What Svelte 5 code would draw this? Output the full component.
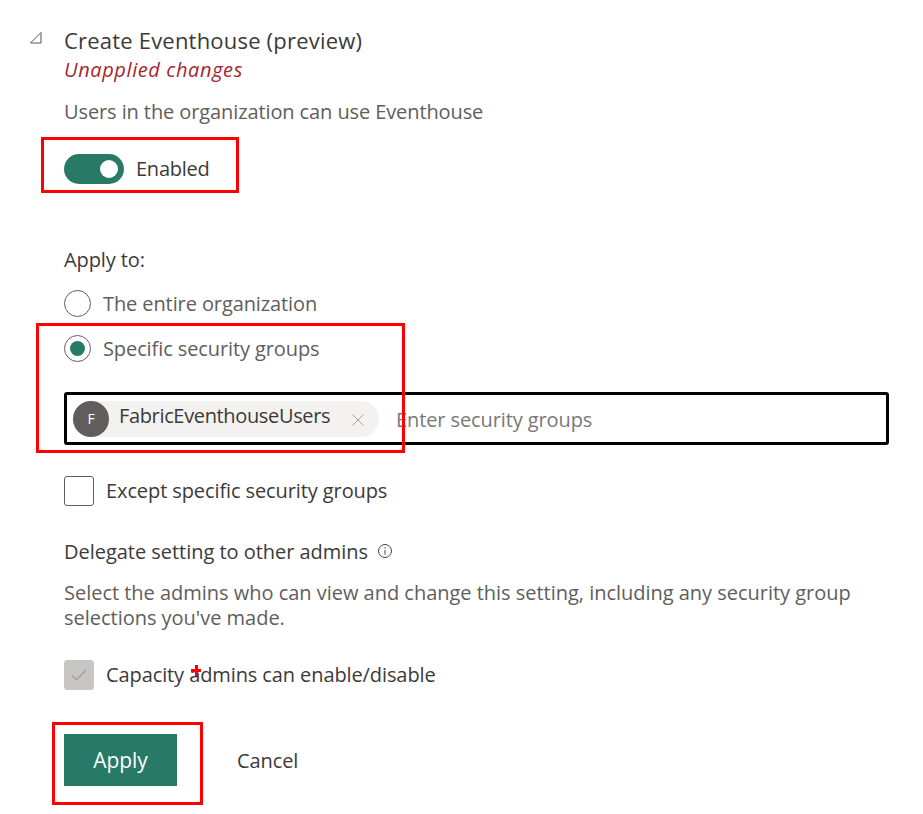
<script>
  let enabled = $state(true);
  let scope = $state('groups');
</script>

<div class="page">
  <header class="head">
    <svg class="caret" width="14" height="14" viewBox="0 0 14 14"><path d="M12 1.5 L12 12 L1.5 12 Z" fill="none" stroke="#555" stroke-width="1"/></svg>
    <div class="title">Create Eventhouse (preview)</div>
  </header>
  <div class="body">
    <div class="unapplied">Unapplied changes</div>
    <div class="desc first">Users in the organization can use Eventhouse</div>

    <div class="toggle-row">
      <span class="toggle"><span class="knob"></span></span>
      <span class="label enabled">{enabled ? 'Enabled' : 'Disabled'}</span>
    </div>

    <div class="apply-to">Apply to:</div>
    <div class="radio-row">
      <span class="radio"></span>
      <span class="muted">The entire organization</span>
    </div>
    <div class="radio-row second">
      <span class="radio on"><span class="dot"></span></span>
      <span class="muted">Specific security groups</span>
    </div>

    <div class="picker">
      <div class="chip">
        <span class="avatar">F</span>
        <span class="chip-name">FabricEventhouseUsers</span>
        <svg class="chip-x" width="14" height="14" viewBox="0 0 14 14"><path d="M1.5 1.5 L12.5 12.5 M12.5 1.5 L1.5 12.5" stroke="#a8a6a4" stroke-width="1"/></svg>
      </div>
      <span class="placeholder">Enter security groups</span>
    </div>

    <div class="check-row except">
      <span class="check"></span>
      <span class="label">Except specific security groups</span>
    </div>

    <div class="delegate">
      <span class="label">Delegate setting to other admins</span>
      <svg class="info" width="14" height="14" viewBox="0 0 14 14"><circle cx="7" cy="7" r="6.5" fill="none" stroke="#444" stroke-width="1"/><path d="M7 6 V10.6" stroke="#444" stroke-width="1"/><rect x="6.4" y="3.4" width="1.2" height="1.2" fill="#444"/></svg>
    </div>
    <p class="desc help">Select the admins who can view and change this setting, including any security group selections you've made.</p>

    <div class="check-row capacity">
      <span class="check disabled">
        <svg width="16" height="12" viewBox="0 0 16 12"><path d="M1 6.5 L5.5 11 L15 1" fill="none" stroke="#a19f9d" stroke-width="1.2"/></svg>
      </span>
      <span class="label">Capacity admins can enable/disable</span>
    </div>

    <div class="actions">
      <button class="apply">Apply</button>
      <button class="cancel">Cancel</button>
    </div>
  </div>

  <!-- screenshot annotations -->
  <div class="mark" style="left:41px;top:137px;width:198px;height:56px"></div>
  <div class="mark" style="left:36px;top:323px;width:369px;height:130px"></div>
  <div class="mark" style="left:52px;top:722px;width:151px;height:83px"></div>
  <span class="plus"></span>
</div>

<style>
  :global(body) {
    margin: 0;
    background: #fff;
  }
  .page {
    position: relative;
    height: 814px;
    overflow: hidden;
    font-family: "Open Sans", "Noto Sans", "Liberation Sans", sans-serif;
    font-size: 20px;
    letter-spacing: -0.1px;
    color: #3b3a39;
  }
  .head {
    display: flex;
    align-items: center;
    padding: 26px 0 0 29px;
    height: 28px;
  }
  .caret { margin-right: 21px; margin-top: -4px; }
  .title { font-size: 22px; letter-spacing: 0.2px; line-height: 28px; margin-top: -1px; }
  .body { padding-left: 64px; }
  .unapplied {
    color: #a4262c;
    font-style: italic;
    letter-spacing: 0.6px;
    line-height: 28px;
    margin-top: 2px;
  }
  .desc { color: #605e5c; line-height: 28px; margin: 0; }
  .first { margin-top: 14px; }
  .toggle-row {
    display: flex;
    align-items: center;
    gap: 12px;
    margin-top: 27px;
    height: 32px;
  }
  .toggle {
    width: 60px;
    height: 30px;
    border-radius: 15px;
    background: #277a66;
    display: flex;
    align-items: center;
    justify-content: flex-end;
    padding-right: 6px;
    box-sizing: border-box;
  }
  .knob { width: 18px; height: 18px; border-radius: 50%; background: #fff; }
  .label { line-height: 28px; }
  .enabled { letter-spacing: -0.25px; }
  .muted { color: #605e5c; line-height: 28px; position: relative; top: 1px; }
  .apply-to { margin-top: 61px; line-height: 28px; }
  .radio-row {
    display: flex;
    align-items: center;
    gap: 12px;
    margin-top: 15px;
    height: 28px;
  }
  .radio-row.second { margin-top: 17px; }
  .radio {
    width: 27px;
    height: 27px;
    border: 1px solid #605e5c;
    border-radius: 50%;
    box-sizing: border-box;
    display: flex;
    align-items: center;
    justify-content: center;
  }
  .dot { width: 15px; height: 15px; border-radius: 50%; background: #277a66; }
  .picker {
    display: flex;
    align-items: center;
    margin-top: 30px;
    width: 825px;
    height: 53px;
    border: 3px solid #000;
    border-radius: 3px;
    box-sizing: border-box;
    padding-left: 6px;
  }
  .chip {
    display: flex;
    align-items: center;
    width: 306px;
    height: 36px;
    border-radius: 18px;
    background: #f3f2f1;
    flex: none;
  }
  .avatar {
    width: 36px;
    height: 36px;
    border-radius: 50%;
    background: #605e5c;
    color: #fff;
    font-size: 14px;
    display: flex;
    align-items: center;
    justify-content: center;
    flex: none;
  }
  .chip-name { margin-left: 10px; margin-top: -7px; letter-spacing: -0.35px; white-space: nowrap; }
  .chip-x { margin-left: 21px; margin-top: 2px; }
  .placeholder { margin-left: 17px; margin-top: 2px; color: #7a7876; white-space: nowrap; }
  .check-row { display: flex; align-items: center; gap: 12px; height: 30px; }
  .except { margin-top: 31px; }
  .check {
    width: 30px;
    height: 30px;
    border: 1px solid #605e5c;
    border-radius: 3px;
    box-sizing: border-box;
    display: flex;
    align-items: center;
    justify-content: center;
  }
  .check.disabled { background: #c8c6c4; border-color: #c8c6c4; }
  .delegate { display: flex; align-items: center; gap: 10px; margin-top: 32px; height: 28px; letter-spacing: -0.03px; }
  .info { margin-top: -3px; }
  .help { margin-top: 14px; width: 820px; line-height: 25px; letter-spacing: -0.02px; }
  .capacity { margin-top: 30px; }
  .actions { display: flex; align-items: center; margin-top: 44px; }
  button { font: inherit; letter-spacing: inherit; border: 0; cursor: pointer; }
  .apply { width: 113px; height: 52px; background: #277a66; color: #fff; font-size: 21px; }
  .cancel { background: none; color: #3b3a39; margin-left: 60px; padding: 0; }
  .mark {
    position: absolute;
    border: 3px solid #f00;
    box-sizing: border-box;
    pointer-events: none;
  }
  .plus {
    position: absolute;
    left: 191px;
    top: 669px;
    width: 10px;
    height: 3px;
    background: #f00;
  }
  .plus::after {
    content: "";
    position: absolute;
    left: 3.5px;
    top: -4px;
    width: 3px;
    height: 11px;
    background: #f00;
  }
</style>
